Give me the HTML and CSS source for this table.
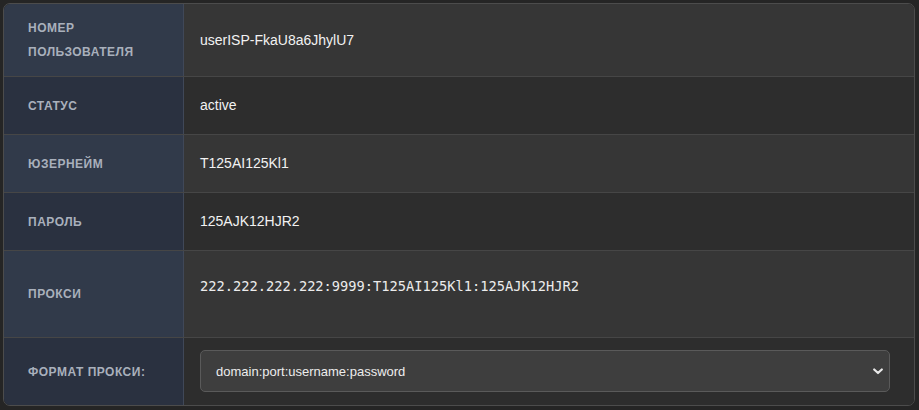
FILE: index.html
```html
<!DOCTYPE html>
<html lang="ru">
<head>
<meta charset="utf-8">
<title>Proxy</title>
<link rel="stylesheet" href="styles.css">
</head>
<body>
<div class="card">
  <div class="row odd">
    <div class="label">Номер пользователя</div>
    <div class="value">userISP-FkaU8a6JhylU7</div>
  </div>
  <div class="row even">
    <div class="label">Статус</div>
    <div class="value">active</div>
  </div>
  <div class="row odd">
    <div class="label">Юзернейм</div>
    <div class="value">T125AI125Kl1</div>
  </div>
  <div class="row even">
    <div class="label">Пароль</div>
    <div class="value">125AJK12HJR2</div>
  </div>
  <div class="row odd">
    <div class="label">Прокси</div>
    <div class="value"><div class="mono">222.222.222.222:9999:T125AI125Kl1:125AJK12HJR2</div></div>
  </div>
  <div class="row even last">
    <div class="label">Формат прокси:</div>
    <div class="value select-cell">
      <div class="select">
        <span>domain:port:username:password</span>
        <svg class="chev" width="10" height="7" viewBox="0 0 10 7"><polyline points="1.2,1.5 5,5 8.8,1.5" fill="none" stroke="#e8e8e8" stroke-width="2.2" stroke-linecap="round" stroke-linejoin="round"/></svg>
      </div>
    </div>
  </div>
</div>
</body>
</html>
```
FILE: styles.css
```css
html, body {
  margin: 0;
  background: #252525;
}
body {
  padding: 3px;
  font-family: "Liberation Sans", Arial, sans-serif;
}
.card {
  width: 910px;
  border: 1px solid #4c4c4c;
  border-radius: 7px;
  overflow: hidden;
}
.row {
  display: grid;
  grid-template-columns: 180px 1fr;
  border-bottom: 1px solid #464646;
}
.row.last {
  border-bottom: none;
}
.label {
  padding: 12px 24px;
  line-height: 24px;
  font-size: 12px;
  font-weight: bold;
  text-transform: uppercase;
  letter-spacing: 0.5px;
  color: #a9b0bc;
  border-right: 1px solid #404858;
  display: flex;
  align-items: center;
}
.odd .label { background: #313a4a; }
.even .label { background: #2a3140; }
.odd .value { background: #363636; }
.even .value { background: #2d2d2d; }
.value {
  padding: 16px 24px 16px 16px;
  line-height: 25px;
  font-size: 14px;
  color: #f2f2f2;
  display: flex;
  align-items: center;
}
.mono {
  font-family: "DejaVu Sans Mono", "Liberation Mono", monospace;
  font-size: 13.7px;
  line-height: 21px;
  padding: 9px 0 24px;
  color: #ececec;
}
.select-cell {
  padding: 12px 24px 13px 16px;
}
.select {
  flex: 1;
  height: 42px;
  box-sizing: border-box;
  border: 1px solid #5a5a5a;
  border-radius: 5px;
  background: #3e3e3e;
  display: flex;
  align-items: center;
  justify-content: space-between;
  padding: 0 6px 0 15px;
  font-size: 13px;
  color: #ededed;
}
.chev {
  display: block;
}
```
